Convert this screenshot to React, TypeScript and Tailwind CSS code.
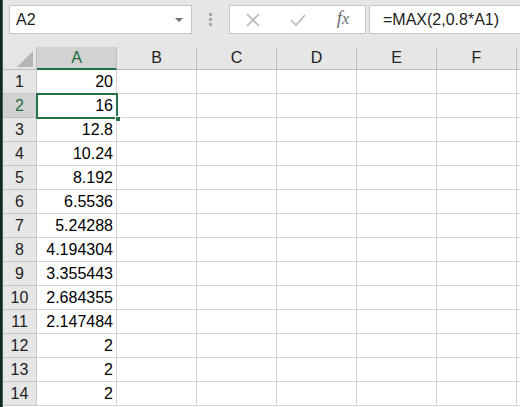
import React from 'react';

const columns = ['A', 'B', 'C', 'D', 'E', 'F'];
const values = [
  '20', '16', '12.8', '10.24', '8.192', '6.5536', '5.24288',
  '4.194304', '3.355443', '2.684355', '2.147484', '2', '2', '2',
];

const font = { fontFamily: '"Liberation Sans", Arial, sans-serif' };

function FormulaBar() {
  return (
    <div className="h-[47px] bg-[#e6e6e6] flex items-start pt-[5px] pl-[6px]">
      <div className="w-[183px] h-[29px] bg-white border border-[#c6c6c6] flex items-center pl-[6px] pr-[8px] text-[16px] text-[#222]">
        <span className="flex-1">A2</span>
        <span className="w-0 h-0 border-l-[4px] border-r-[4px] border-t-[4px] border-l-transparent border-r-transparent border-t-[#6f6f6f]" />
      </div>
      <div className="w-[37px] h-[29px] flex flex-col items-center justify-center gap-[2px]">
        <span className="w-[3px] h-[3px] bg-[#a8a8a8]" />
        <span className="w-[3px] h-[3px] bg-[#a8a8a8]" />
        <span className="w-[3px] h-[3px] bg-[#a8a8a8]" />
      </div>
      <div className="w-[137px] h-[29px] bg-white border border-[#c6c6c6] flex items-center">
        <div className="w-[46px] flex justify-center">
          <svg width="16" height="16" viewBox="0 0 16 16">
            <path d="M2 2 L14 14 M14 2 L2 14" stroke="#b8b8b8" strokeWidth="1.6" fill="none" />
          </svg>
        </div>
        <div className="w-[46px] flex justify-center">
          <svg width="18" height="14" viewBox="0 0 18 14">
            <path d="M2 7 L7 12 L16 2" stroke="#b8b8b8" strokeWidth="1.6" fill="none" />
          </svg>
        </div>
        <div
          className="w-[45px] flex justify-center text-[19px] italic text-[#6d6d6d] -mt-[2px]"
          style={{ fontFamily: '"Liberation Serif", "Times New Roman", serif' }}
        >
          <span>f</span><span className="text-[16px] mt-[3px]">x</span>
        </div>
      </div>
      <div className="ml-[3px] flex-1 h-[29px] bg-white border border-[#c6c6c6] border-r-0 flex items-center pl-[13px] text-[16px] text-[#222]">
        =MAX(2,0.8*A1)
      </div>
    </div>
  );
}

function Sheet() {
  return (
    <div className="relative flex-1 bg-white">
      {/* column headers */}
      <div className="flex h-[23px] bg-[#e6e6e6]">
        <div className="w-[34px] h-full border-r border-b border-[#bdbdbd] flex items-end justify-end pr-[3px] pb-[2px]">
          <svg width="16" height="16" viewBox="0 0 16 16">
            <path d="M16 0 L16 16 L0 16 Z" fill="#b5b5b5" />
          </svg>
        </div>
        {columns.map((c) =>
          c === 'A' ? (
            <div
              key={c}
              className="w-[80px] h-full bg-[#d2d2d2] border-r border-[#bdbdbd] border-b-2 border-b-[#217346] flex items-center justify-center text-[16px] text-[#1e6b3e]"
            >
              {c}
            </div>
          ) : (
            <div
              key={c}
              className="w-[80px] h-full border-r border-b border-[#bdbdbd] flex items-center justify-center text-[16px] text-[#222]"
            >
              {c}
            </div>
          )
        )}
        <div className="flex-1 h-full border-b border-[#bdbdbd]" />
      </div>

      {values.map((v, i) => {
        const active = i === 1;
        return (
          <div key={i} className="flex h-[24px]">
            <div
              className={`w-[34px] h-full border-r border-b flex items-center justify-center text-[16px] ${
                active
                  ? 'bg-[#d2d2d2] border-[#bdbdbd] text-[#1e6b3e]'
                  : 'bg-[#e6e6e6] border-[#c8c8c8] text-[#222]'
              }`}
            >
              {i + 1}
            </div>
            <div className="w-[80px] h-full border-r border-b border-[#d4d4d4] flex items-center justify-end pr-[3px] text-[16px] text-black">
              {v}
            </div>
            {columns.slice(1).map((c) => (
              <div key={c} className="w-[80px] h-full border-r border-b border-[#d4d4d4]" />
            ))}
            <div className="flex-1 h-full border-b border-[#d4d4d4]" />
          </div>
        );
      })}

      {/* active cell outline on A2 */}
      <div className="absolute left-[33px] top-[46px] w-[82px] h-[26px] border-2 border-[#217346] pointer-events-none" />
      <div className="absolute left-[112px] top-[69px] w-[6px] h-[6px] bg-[#217346] border border-white" />
    </div>
  );
}

export default function App() {
  return (
    <div className="w-[520px] h-[407px] overflow-hidden flex bg-[#e6e6e6]" style={font}>
      <div className="w-[3px] h-full bg-[#1c2620] border-r border-[#2f6b45]" />
      <div className="flex-1 flex flex-col min-w-0">
        <FormulaBar />
        <Sheet />
      </div>
    </div>
  );
}
